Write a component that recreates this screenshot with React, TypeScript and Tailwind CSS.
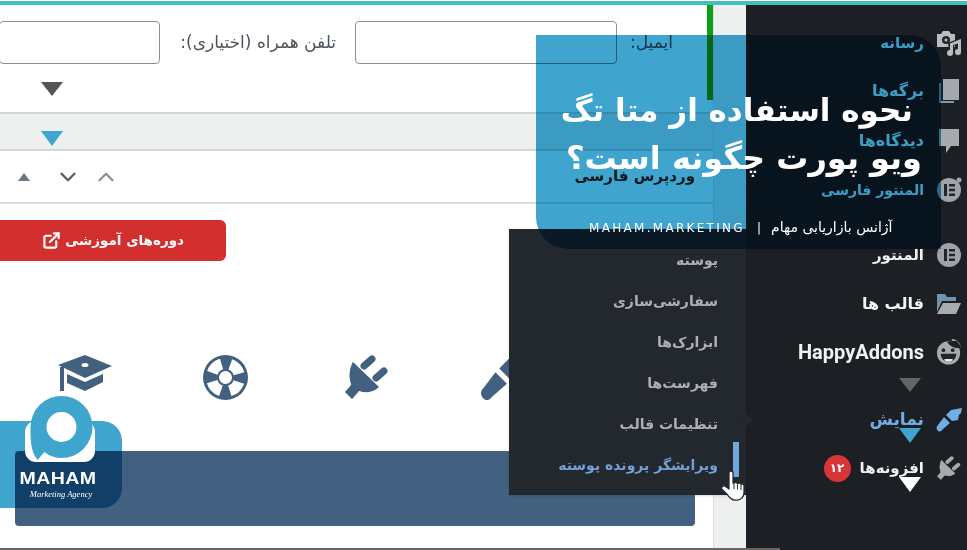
import { ChevronDown, ChevronUp, ExternalLink } from "lucide-react";

const BLUE = "#3fa5cf";

function PlugIcon({ className }: { className: string }) {
  return (
    <svg viewBox="0 0 44 44" className={className} fill="currentColor">
      <path d="M8 8 L33 32 Q25 39 14 35 L7 43 L1 37 L7 30 Q3 19 8 8Z" strokeLinejoin="round" stroke="currentColor" strokeWidth="1.500" />
      <path d="M19 11 L27 4 M31 23 L39 16" stroke="currentColor" strokeWidth="7" strokeLinecap="round" />
    </svg>
  );
}

function BrushIcon({ className }: { className: string }) {
  return (
    <svg viewBox="0 0 26 24" className={className} fill="currentColor">
      <path d="M2 23c-2-2-2-4 0-6l6-8 6 6-8 7c-1 1.500-3 2-4 1z" />
      <path d="M10 7 L15 2 L26 0 L25 5 L23 7 L22 12 L16 13Z" />
    </svg>
  );
}

function ElementorIcon({ className, dot }: { className: string; dot?: boolean }) {
  return (
    <svg viewBox="0 0 26 26" className={className}>
      <circle cx="13" cy="13" r="12" fill="#9ea3a8" />
      <path d="M8 7h3v12H8zM13 7h6v2.500h-6zM13 11.800h6v2.500h-6zM13 16.500h6V19h-6z" fill="#22262a" />
      {dot && <circle cx="23" cy="3" r="2.500" fill="#9ea3a8" />}
    </svg>
  );
}

function HandCursor({ className }: { className: string }) {
  return (
    <svg viewBox="0 0 25 31" className={className}>
      <path
        d="M8 3a2 2 0 0 1 4 0v10l1 .3a2 2 0 0 1 3.500.5a2 2 0 0 1 3.500.6a2 2 0 0 1 3 1.200v7c0 4-3 7.500-7 7.500h-2c-4 0-6-3-8-6l-5-5c-1-2 1-4 3-3l4 3z"
        fill="#ffffff"
        stroke="#2a2a2a"
        strokeWidth="1.300"
        strokeLinejoin="round"
      />
      <path d="M13 14v5M16.500 14.500v5M20 15v5" stroke="#2a2a2a" strokeWidth="1" fill="none" />
    </svg>
  );
}

const sideIcons = {
  media: (
    <svg viewBox="0 0 26 26" className="h-[26px] w-[26px]">
      <path d="M1 4h4l2-3h6l2 3h4v13H1z" fill="#b9bcc0" />
      <circle cx="10" cy="10" r="4" fill="#22262a" />
      <circle cx="10" cy="10" r="1.500" fill="#b9bcc0" />
      <path d="M13 13.500 L25 9 V22 a3 3 0 1 1-3-3 V13.500 L17 15 V23 a3 3 0 1 1-3-3 Z" fill="#22262a" stroke="#22262a" strokeWidth="2" />
      <path d="M14 13.500 L25 9 V22 a3 3 0 1 1-3-3 V13.500 L17 15 V23 a3 3 0 1 1-3-3 Z" fill="#b9bcc0" />
    </svg>
  ),
  pages: (
    <svg viewBox="0 0 22 26" className="h-[26px] w-[22px]">
      <path d="M1 5h2v18h13v2H1z" fill="#7c99ad" />
      <path d="M5 1h16v21H5z" fill="#a4a7ab" />
    </svg>
  ),
  comments: (
    <svg viewBox="0 0 22 26" className="h-[26px] w-[22px]">
      <path d="M1 1h20v17h-8l-5 7v-7H1z" fill="#a8abae" />
    </svg>
  ),
  folder: (
    <svg viewBox="0 0 26 22" className="h-[22px] w-[26px]">
      <path d="M1 1h8l2 3h9v4H6L1 19z" fill="#6f94ad" />
      <path d="M7 10h18l-5 11H1z" fill="#a9abae" />
    </svg>
  ),
  happy: (
    <svg viewBox="0 0 28 28" className="h-[28px] w-[28px]">
      <circle cx="13.500" cy="15" r="12.500" fill="#a9abae" />
      <path d="M17 1c4 0 8 3 9 8" stroke="#a9abae" strokeWidth="2" fill="none" />
      <path d="M12 3c2 4 7 7 13 7l2-2-5-6z" fill="#1c1f23" />
      <circle cx="8" cy="12" r="2" fill="#22262a" />
      <circle cx="18" cy="12" r="2" fill="#22262a" />
      <path d="M5 16h17a8.500 8.500 0 0 1-17 0z" fill="#22262a" />
      <path d="M9 21.500h9a4.500 3 0 0 1-9 0z" fill="#e8e8e8" />
    </svg>
  ),
};

const sideRows = [
  { label: "رسانه", icon: sideIcons.media, top: "mt-[25px]", size: "text-[15px]" },
  { label: "برگه‌ها", icon: sideIcons.pages, top: "mt-[22px]", size: "text-[16px]" },
  { label: "دیدگاه‌ها", icon: sideIcons.comments, top: "mt-[24px]", size: "text-[16px]" },
  { label: "المنتور فارسی", icon: <ElementorIcon dot className="h-[26px] w-[26px]" />, top: "mt-[23px]", size: "text-[14px]" },
  { label: "المنتور", icon: <ElementorIcon className="h-[26px] w-[26px]" />, top: "mt-[39px]", size: "text-[15px]" },
  { label: "قالب ها", icon: sideIcons.folder, top: "mt-[23px]", size: "text-[16px]" },
  { label: "HappyAddons", icon: sideIcons.happy, top: "mt-[22px]", size: "font-['Roboto',sans-serif] text-[20px]" },
];

const menuItems = ["پوسته", "سفارشی‌سازی", "ابزارک‌ها", "فهرست‌ها", "تنظیمات قالب"];

export default function App() {
  return (
    <div className="relative h-[550px] w-[967px] overflow-hidden bg-white font-['DejaVu_Sans',sans-serif]">
      <div className="flex h-full flex-col blur-[0.4px]">
        <div className="mt-px h-1 shrink-0 bg-[#44bfbf]" />
        <div className="flex min-h-0 flex-1">
          {/* main content */}
          <div className="relative flex w-[714px] shrink-0 flex-col border-r border-[#dcdfe0]">
            <div className="absolute right-0 top-0 h-[95px] w-[6px] bg-[#0aa01a]" />
            <div className="flex items-center pt-4 text-[17px] text-[#4b545c]">
              <div className="h-[43px] w-[161px] -ml-px rounded border border-[#8c8f94]" />
              <span dir="rtl" className="ml-[13px] w-[163px] whitespace-nowrap">تلفن همراه (اختیاری):</span>
              <div className="ml-[19px] h-[43px] w-[262px] rounded border border-[#8c8f94]" />
              <span dir="rtl" className="ml-3 w-[44px] whitespace-nowrap">ایمیل:</span>
            </div>
            <div className="ml-[41px] mt-[18px] h-0 w-0 border-x-[11px] border-t-[14px] border-x-transparent border-t-[#555555]" />
            <div className="mt-4 h-[39px] border-y-2 border-[#d4d7d8] bg-[#eef0f0] pl-[41px] pt-[17px]">
              <div className="h-0 w-0 border-x-[11px] border-t-[15px] border-x-transparent border-t-[#3fa5cf]" />
            </div>
            <div className="flex h-[53px] items-center justify-between border-b-2 border-[#dcdfe0] pl-[18px] pr-[18px]">
              <div className="flex items-center text-[#555d66]">
                <div className="h-0 w-0 border-x-[6px] border-b-[8px] border-x-transparent border-b-[#6c7780]" />
                <ChevronDown size={26} className="ml-[25px]" strokeWidth={2.2} />
                <ChevronUp size={26} className="ml-3 text-[#8b9298]" strokeWidth={2.2} />
              </div>
              <span dir="rtl" className="text-[15px] font-bold text-[#222222]">وردپرس فارسی</span>
            </div>
            <div className="mt-4 flex h-[41px] w-[226px] items-center justify-end rounded-r-md bg-[#d32f2f] pr-[42px] text-white">
              <ExternalLink size={19} strokeWidth={2.8} className="mr-1" />
              <span dir="rtl" className="text-[13.500px] font-bold">دوره‌های آموزشی</span>
            </div>
            <div className="mt-[94px] flex h-[45px] items-start text-[#426180]">
              <svg viewBox="0 0 54 36" className="ml-[58px] h-[36px] w-[54px]" fill="currentColor">
                <path d="M0 10 L27 0 L54 11 L27 23Z" />
                <ellipse cx="27" cy="10" rx="3.500" ry="2" fill="#ffffff" />
                <path d="M9 19 L27 27 L45 19 V27 L27 36 L9 28Z" />
                <rect x="2" y="12" width="4" height="24" />
              </svg>
              <svg viewBox="0 0 45 45" className="ml-[91px] h-[45px] w-[45px]">
                <circle cx="22.500" cy="22.500" r="22.500" fill="currentColor" />
                <circle cx="22.500" cy="22.500" r="14" fill="none" stroke="#ffffff" strokeWidth="11" strokeDasharray="13 9" strokeDashoffset="-4.500" />
                <circle cx="22.500" cy="22.500" r="6.500" fill="#ffffff" />
              </svg>
              <PlugIcon className="ml-[97px] h-[44px] w-[44px]" />
              <BrushIcon className="ml-[91px] h-[46px] w-[50px]" />
            </div>
            <div className="ml-[15px] mt-[51px] h-[75px] w-[680px] rounded bg-[#426180]" />
          </div>
          <div className="w-8 shrink-0 bg-[#eef0f0]" />

          {/* admin sidebar */}
          <div className="relative flex w-[221px] shrink-0 flex-col bg-[#1c1f23] pr-[5px]">
            {sideRows.map((row) => (
              <div key={row.label} dir="rtl" className={`flex h-[26px] items-center ${row.top}`}>
                <span className="flex w-[26px] shrink-0 justify-center">{row.icon}</span>
                <span className={`mr-[12px] whitespace-nowrap font-bold text-[#f2f2f2] ${row.size}`}>
                  {row.label}
                </span>
              </div>
            ))}
            <div dir="rtl" className="mt-[42px] flex h-[26px] items-center">
              <span className="flex w-[26px] shrink-0 justify-center">
                <BrushIcon className="h-[24px] w-[26px] text-[#72aee6]" />
              </span>
              <span className="mr-[12px] whitespace-nowrap text-[17px] font-bold text-[#72aee6]">نمایش</span>
            </div>
            <div dir="rtl" className="mt-[22px] flex h-[26px] items-center">
              <span className="flex w-[26px] shrink-0 justify-center">
                <PlugIcon className="h-[24px] w-[24px] text-[#a7aaad]" />
              </span>
              <span className="mr-[12px] whitespace-nowrap text-[15px] font-bold text-[#f2f2f2]">افزونه‌ها</span>
              <span className="mr-[9px] flex h-[27px] w-[27px] items-center justify-center rounded-full bg-[#d63638] text-[12px] font-bold text-white">۱۲</span>
            </div>
            <div className="absolute left-[153px] top-[373px] h-0 w-0 border-x-[11px] border-t-[14px] border-x-transparent border-t-[#646464]" />
            <div className="absolute left-[153px] top-[423px] h-0 w-0 border-x-[11px] border-t-[15px] border-x-transparent border-t-[#3fa5cf]" />
            <div className="absolute left-[153px] top-[472px] h-0 w-0 border-x-[11px] border-t-[15px] border-x-transparent border-t-white" />
          </div>
        </div>

        {/* flyout menu */}
        <div dir="rtl" className="absolute left-[509px] top-[229px] flex h-[266px] w-[237px] flex-col bg-[#22282e] pr-[28px] pt-[11px] shadow-sm">
          {menuItems.map((item) => (
            <div key={item} className="flex h-[41px] items-center text-[14px] font-bold text-[#adb0b3]">
              {item}
            </div>
          ))}
          <div className="flex h-[41px] items-center text-[14px] font-bold tracking-[0.2px] text-[#72a0d4]">ویرایشگر پرونده پوسته</div>
          <div className="absolute -right-[5px] top-[186px] h-[10px] w-[10px] rotate-45 bg-[#22282e]" />
          <div className="absolute right-[7px] top-[213px] h-[35px] w-[6px] bg-[#6fa8dc]" />
          <HandCursor className="absolute right-0 top-[241px] h-[31px] w-[25px]" />
        </div>
        <div className="absolute bottom-0 left-0 h-[2px] w-[780px] bg-[#666666]" />
      </div>

      {/* title card */}
      <div className="absolute left-[536px] top-[35px] h-[214px] w-[405px] rounded-bl-[32px] rounded-tr-[32px] bg-[#3fa5cf] mix-blend-multiply" />
      <div className="absolute left-[536px] top-[35px] flex h-[214px] w-[405px] flex-col text-white">
        <h1 dir="rtl" className="mt-[51px] whitespace-nowrap pr-[28px] text-[31px] font-bold leading-[48px]">نحوه استفاده از متا تگ</h1>
        <h1 dir="rtl" className="whitespace-nowrap pr-[19px] text-[32px] font-bold leading-[48px]">ویو پورت چگونه است؟</h1>
        <div className="mt-[35px] flex items-center pl-[53px] text-[12px]">
          <span className="w-[156px] whitespace-nowrap tracking-[2.3px]">MAHAM.MARKETING</span>
          <span className="ml-3">|</span>
          <span dir="rtl" className="ml-[10px] whitespace-nowrap text-[14px]">آژانس بازاریابی مهام</span>
        </div>
      </div>

      {/* logo */}
      <div className="absolute left-0 top-[421px] h-[87px] w-[122px] rounded-r-[20px] bg-[#3fa5cf] mix-blend-multiply" />
      <svg viewBox="0 0 100 70" className="absolute left-0 top-[396px] h-[70px] w-[100px]">
        <rect x="25" y="25" width="70" height="41" rx="11" fill="#ffffff" />
        <path
          fillRule="evenodd"
          d="M30.500 31a31 31 0 1 1 31 31c-6 0-12-2-17-6l-7 8c-7-9-7-20-7-33zM46.500 31a15 15 0 1 0 30 0a15 15 0 1 0-30 0z"
          fill={BLUE}
        />
      </svg>
      <div className="absolute left-[18px] top-[469px] w-[80px] text-center font-['Liberation_Sans',sans-serif] text-white">
        <div className="text-[17px] font-bold leading-[20px] tracking-[0.4px] [transform:scaleX(1.15)]">MAHAM</div>
        <div className="ml-[6px] whitespace-nowrap font-['Liberation_Serif',serif] text-[8.500px] italic leading-[10px]">Marketing Agency</div>
      </div>
    </div>
  );
}
